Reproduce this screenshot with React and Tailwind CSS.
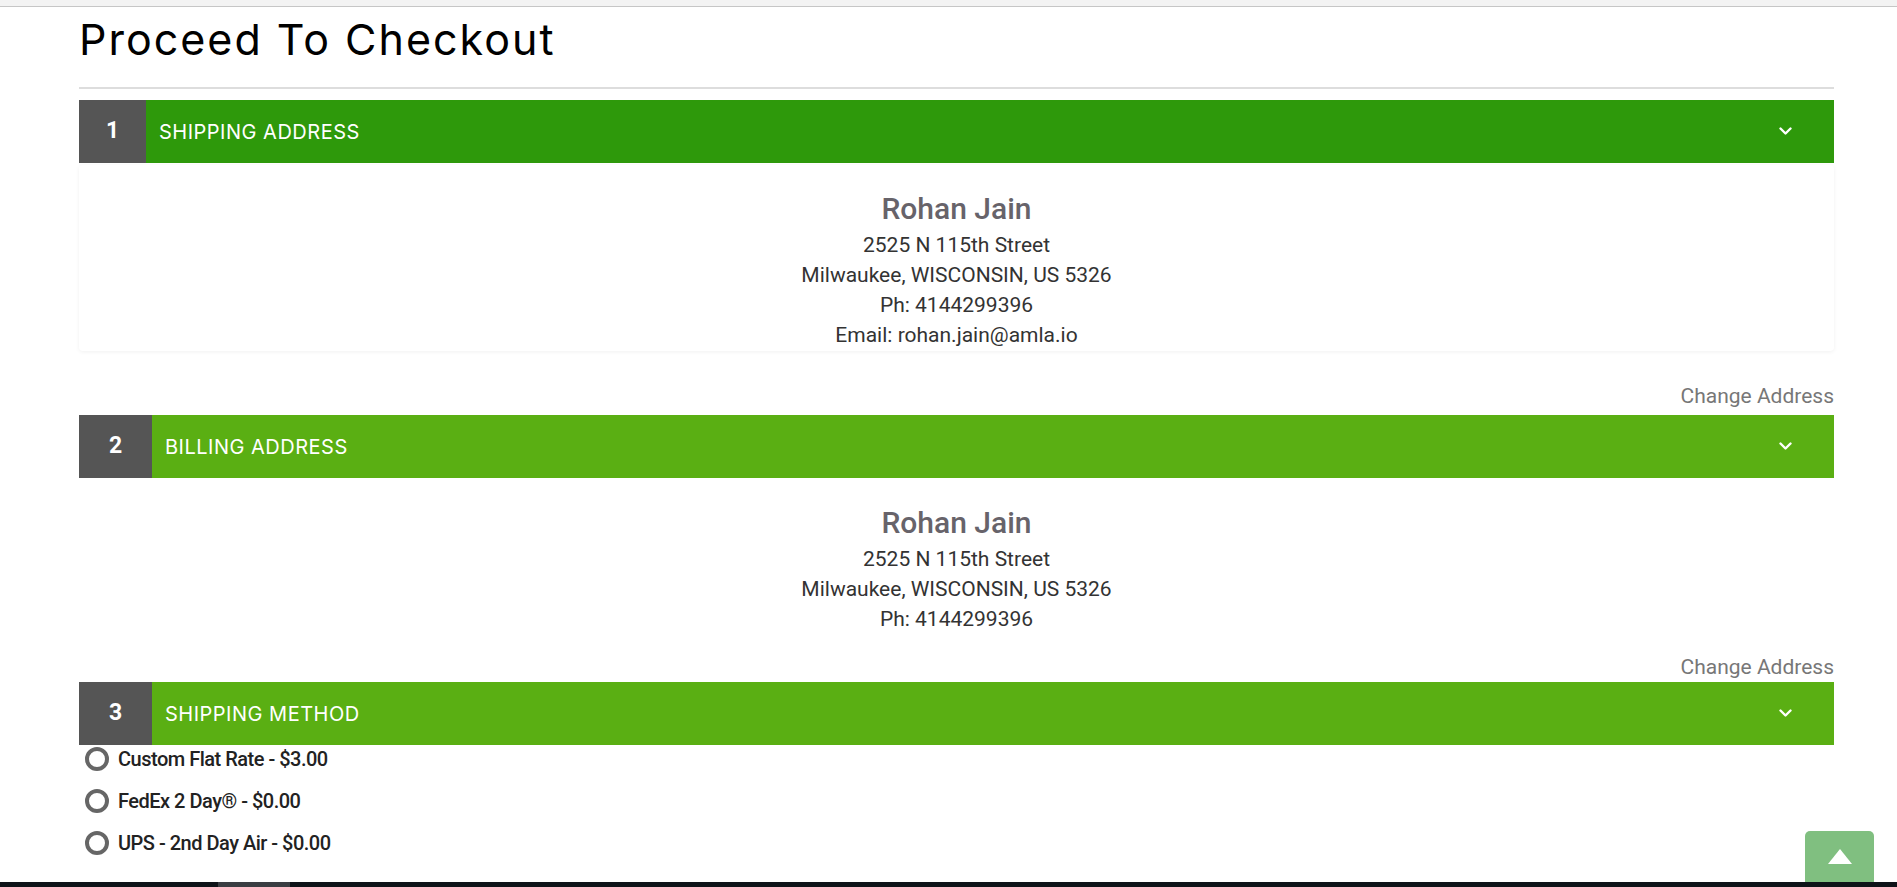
import { useState } from 'react';

// Checkout steps: shipping address, billing address, shipping method
const ADDRESS = {
  name: 'Rohan Jain',
  street: '2525 N 115th Street',
  city: 'Milwaukee, WISCONSIN, US 5326',
  phone: 'Ph: 4144299396',
  email: 'Email: rohan.jain@amla.io',
};

const METHODS = [
  { id: 'flat', label: 'Custom Flat Rate - $3.00' },
  { id: 'fedex', label: 'FedEx 2 Day® - $0.00' },
  { id: 'ups', label: 'UPS - 2nd Day Air - $0.00' },
];

const Chevron = () => (
  <svg width="13" height="9" viewBox="0 0 13 9" fill="none">
    <polyline points="1.5,1.5 6.5,6.5 11.5,1.5" stroke="white" strokeWidth="2.4" strokeLinecap="round" strokeLinejoin="round" />
  </svg>
);

function StepBar({ num, title, dark, numWidth }) {
  return (
    <div className={`flex h-[63px] items-center ${dark ? 'bg-[#2e990b]' : 'bg-[#5aaf13]'}`}>
      <div className={`flex h-full ${numWidth} items-center justify-center bg-[#555555] text-[23px] font-bold text-white`}>
        {num}
      </div>
      <div className="flex-1 pl-[13px] font-['Inter',sans-serif] text-[20px] tracking-[0.5px] text-white">{title}</div>
      <div className="pr-[42px]">
        <Chevron />
      </div>
    </div>
  );
}

function AddressLines({ withEmail }) {
  return (
    <div className="text-center">
      <div className="text-[30px] font-medium leading-[36px] text-[#67636a]">{ADDRESS.name}</div>
      <div className="mt-[3px] text-[21px] leading-[30px] text-[#333]">
        <div>{ADDRESS.street}</div>
        <div>{ADDRESS.city}</div>
        <div>{ADDRESS.phone}</div>
        {withEmail && <div>{ADDRESS.email}</div>}
      </div>
    </div>
  );
}

export default function App() {
  const [method, setMethod] = useState(null);

  return (
    <div className="min-h-screen bg-white font-['Roboto',sans-serif]">
      <div className="h-[7px] border-b border-[#c6c6c6] bg-[#f3f3f3]" />

      <div className="ml-[79px] w-[1755px]">
        <h1 className="mt-[8px] font-['Inter',sans-serif] text-[43px] font-normal leading-[48px] tracking-[2px] text-black">
          Proceed To Checkout
        </h1>
        <div className="mt-[24px] h-[2px] bg-[#dddddd]" />

        <div className="mt-[11px]">
          <StepBar num="1" title="SHIPPING ADDRESS" dark numWidth="w-[67px]" />
        </div>
        <div className="mt-[2px] h-[186px] rounded-[4px] bg-white pt-[26px] shadow-[0_1px_4px_rgba(0,0,0,0.06)]">
          <AddressLines withEmail />
        </div>
        <div className="mt-[33px] text-right text-[21px] leading-[24px] text-[#777]">Change Address</div>

        <div className="mt-[7px]">
          <StepBar num="2" title="BILLING ADDRESS" numWidth="w-[73px]" />
        </div>
        <div className="mt-[27px]">
          <AddressLines />
        </div>
        <div className="mt-[21px] text-right text-[21px] leading-[24px] text-[#777]">Change Address</div>

        <div className="mt-[3px]">
          <StepBar num="3" title="SHIPPING METHOD" numWidth="w-[73px]" />
        </div>
        <div className="flex flex-col gap-[14px] pl-[6px] pt-0">
          {METHODS.map((m) => (
            <label key={m.id} className="flex h-[28px] cursor-pointer items-center gap-[9px]" onClick={() => setMethod(m.id)}>
              <span className="flex h-[24px] w-[24px] items-center justify-center rounded-full border-[4px] border-[#666]">
                {method === m.id && <span className="h-[9px] w-[9px] rounded-full bg-[#666]" />}
              </span>
              <span className="text-[20px] font-medium tracking-[-0.5px] text-[#222]">{m.label}</span>
            </label>
          ))}
        </div>
      </div>

      {/* scroll to top */}
      <button className="fixed bottom-[5px] right-[23px] flex h-[51px] w-[69px] items-center justify-center rounded-t-[5px] bg-[#80bf80]">
        <svg width="24" height="15" viewBox="0 0 24 15">
          <polygon points="12,0 24,15 0,15" fill="white" />
        </svg>
      </button>

      {/* taskbar strip */}
      <div className="fixed bottom-0 left-0 flex h-[5px] w-full bg-[#0e1318]">
        <div className="ml-[218px] h-full w-[72px] bg-[#3a3d42]" />
      </div>
    </div>
  );
}
